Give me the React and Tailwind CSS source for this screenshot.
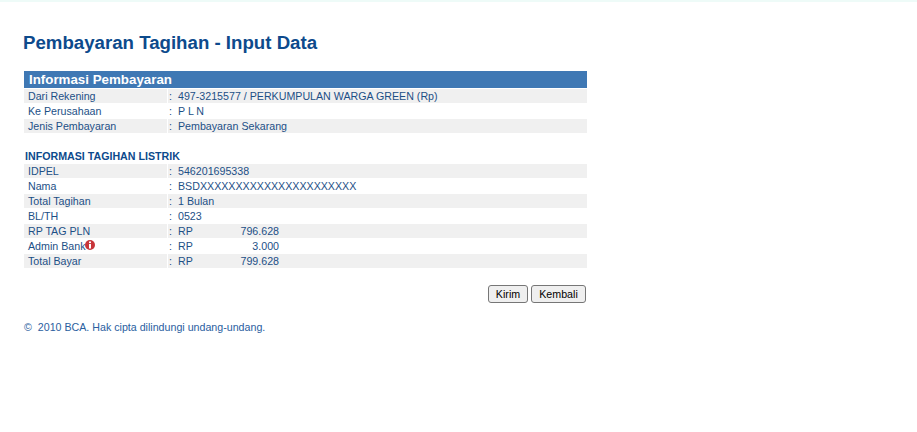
const labelRows = [
	{ label: 'Dari Rekening', value: '497-3215577 / PERKUMPULAN WARGA GREEN (Rp)' },
	{ label: 'Ke Perusahaan', value: 'P L N' },
	{ label: 'Jenis Pembayaran', value: 'Pembayaran Sekarang' },
]

const tagihanRows = [
	{ label: 'IDPEL', value: '546201695338' },
	{ label: 'Nama', value: 'BSDXXXXXXXXXXXXXXXXXXXXXX' },
	{ label: 'Total Tagihan', value: '1 Bulan' },
	{ label: 'BL/TH', value: '0523' },
	{ label: 'RP TAG PLN', amount: '796.628' },
	{ label: 'Admin Bank', amount: '3.000', info: true },
	{ label: 'Total Bayar', amount: '799.628' },
]

const InfoIcon = () => (
	<svg width="10" height="10" viewBox="0 0 10 10" className="shrink-0 -mt-[2px]">
		<circle cx="5" cy="5" r="5" fill="#c8353a" />
		<rect x="4" y="1.5" width="2" height="1.6" fill="#fff" />
		<rect x="4" y="4" width="2" height="4.5" fill="#fff" />
	</svg>
)

const Row = ({ row, index }) => {
	const shade = index % 2 === 0 ? 'bg-[#f0f0f0]' : 'bg-white'
	return (
		<div className="flex h-[15px] pt-px gap-px leading-[14px]">
			<div className={`w-[143px] pl-1 flex items-center ${shade}`}>
				<span>{row.label}</span>
				{row.info && <InfoIcon />}
			</div>
			<div className={`flex-1 flex pl-[1px] ${shade}`}>
				<span className="w-[9px]">:</span>
				{row.amount ? (
					<div className="flex">
						<span className="w-[20px]">RP</span>
						<span className="w-[81px] text-right">{row.amount}</span>
					</div>
				) : (
					<span>{row.value}</span>
				)}
			</div>
		</div>
	)
}

const App = () => {
	return (
		<div className="min-h-[432px] bg-white border-t-2 border-[#eefbf8] font-['Liberation_Sans',Arial,sans-serif] text-[10.67px] text-[#1c4f86]">
			<div className="w-[563px] ml-6 pt-[30px]">
				<h1 className="-ml-px text-[18.67px] leading-[21px] font-bold text-[#0d4a8c]">Pembayaran Tagihan - Input Data</h1>
				<div className="mt-[18px] h-[17px] bg-[#3f78b4] pl-[5px] text-[13.33px] leading-[17px] font-bold text-white">
					Informasi Pembayaran
				</div>
				<div>
					{labelRows.map((row, i) => (
						<Row key={row.label} row={row} index={i} />
					))}
				</div>
				<div className="mt-[15px] pl-px h-[15px] leading-[17px] font-bold text-[#0d4a8c]">INFORMASI TAGIHAN LISTRIK</div>
				<div>
					{tagihanRows.map((row, i) => (
						<Row key={row.label} row={row} index={i} />
					))}
				</div>
				<div className="flex justify-end gap-[3px] mt-[17px] pr-px">
					<button className="h-[18px] w-[40px] border border-[#767676] rounded-[3px] bg-[#efefef] text-[10.67px] leading-none text-black">Kirim</button>
					<button className="h-[18px] w-[55px] border border-[#767676] rounded-[3px] bg-[#efefef] text-[10.67px] leading-none text-black">Kembali</button>
				</div>
				<p className="mt-[17px] leading-[14px] text-[#2a5ea0]">©&nbsp; 2010 BCA. Hak cipta dilindungi undang-undang.</p>
			</div>
		</div>
	)
}

export default App
